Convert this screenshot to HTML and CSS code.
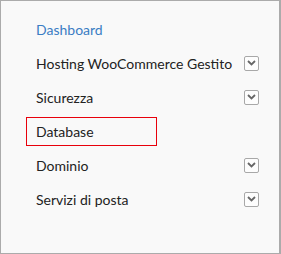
FILE: index.html
```html
<!DOCTYPE html>
<html lang="it">
<head>
    <meta charset="UTF-8">
    <meta name="viewport" content="width=device-width, initial-scale=1.0">
    <title>Menu</title>
    <link rel="stylesheet" href="styles.css">
</head>
<body>

    <nav class="panel">
        <ul class="menu">
            <li class="menu-item"><a href="#" class="menu-link active">Dashboard</a></li>
            <li class="menu-item">
                <a href="#" class="menu-link">Hosting WooCommerce Gestito</a>
                <span class="toggle"><svg width="9" height="6" viewBox="0 0 9 6"><path d="M1 1 L4.5 4.5 L8 1" fill="none" stroke="#666" stroke-width="1.8"/></svg></span>
            </li>
            <li class="menu-item">
                <a href="#" class="menu-link">Sicurezza</a>
                <span class="toggle"><svg width="9" height="6" viewBox="0 0 9 6"><path d="M1 1 L4.5 4.5 L8 1" fill="none" stroke="#666" stroke-width="1.8"/></svg></span>
            </li>
            <li class="menu-item"><a href="#" class="menu-link focused">Database</a></li>
            <li class="menu-item">
                <a href="#" class="menu-link">Dominio</a>
                <span class="toggle"><svg width="9" height="6" viewBox="0 0 9 6"><path d="M1 1 L4.5 4.5 L8 1" fill="none" stroke="#666" stroke-width="1.8"/></svg></span>
            </li>
            <li class="menu-item">
                <a href="#" class="menu-link">Servizi di posta</a>
                <span class="toggle"><svg width="9" height="6" viewBox="0 0 9 6"><path d="M1 1 L4.5 4.5 L8 1" fill="none" stroke="#666" stroke-width="1.8"/></svg></span>
            </li>
        </ul>
    </nav>

</body>
</html>
```

FILE: styles.css
```css
body {
    font-family: Lato, "Liberation Sans", sans-serif;
    margin: 0;
    padding: 0;
}
.panel {
    width: 281px;
    height: 254px;
    box-sizing: border-box;
    border: 1px solid #ababab;
    border-right-width: 2px;
    background-color: #f9f9f9;
    padding: 11px 20px 0 25px;
}
.menu {
    list-style: none;
    margin: 0;
    padding: 0;
}
.menu-item {
    display: flex;
    align-items: center;
    height: 34px;
}
.menu-link {
    display: block;
    box-sizing: border-box;
    padding: 5px 9px;
    border: 1px solid transparent;
    font-size: 14px;
    line-height: 17px;
    color: #222;
    text-decoration: none;
    white-space: nowrap;
}
.menu-link.active {
    color: #3b7dc4;
}
.menu-link.focused {
    width: 131px;
    border-color: #e8000b;
}
.toggle {
    flex-shrink: 0;
    margin-left: auto;
    width: 15px;
    height: 15px;
    box-sizing: border-box;
    border: 1px solid #a8a8a8;
    border-radius: 2px;
    background-color: #fdfdfd;
    display: flex;
    align-items: center;
    justify-content: center;
}
.toggle svg {
    display: block;
}
```
